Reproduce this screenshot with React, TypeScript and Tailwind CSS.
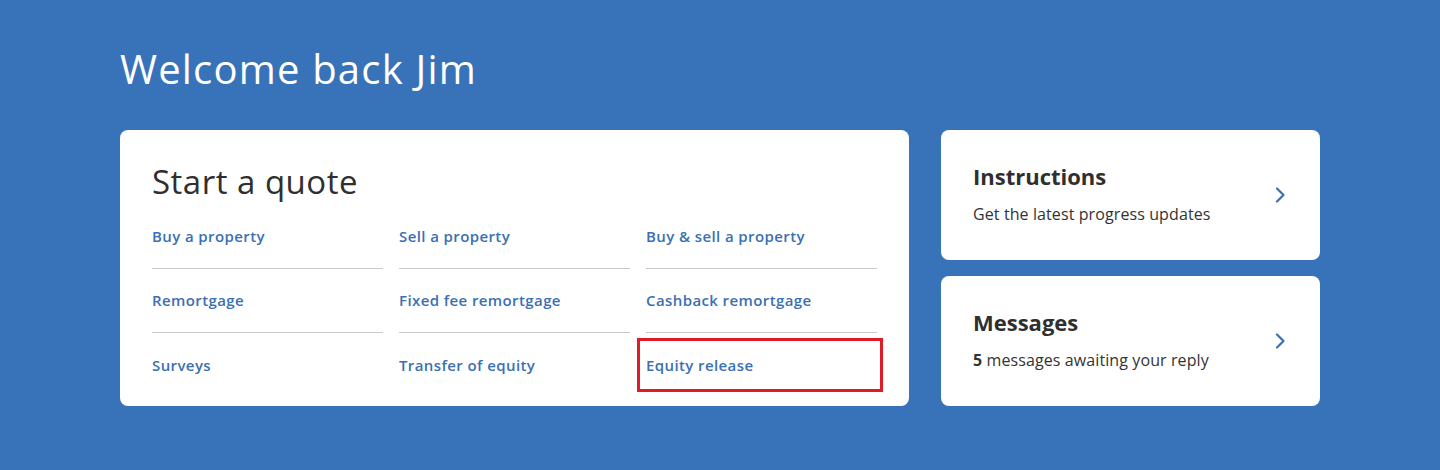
const LINKS = [
  "Buy a property",
  "Sell a property",
  "Buy & sell a property",
  "Remortgage",
  "Fixed fee remortgage",
  "Cashback remortgage",
  "Surveys",
  "Transfer of equity",
  "Equity release",
];

function Chevron() {
  return (
    <svg width="12" height="18" viewBox="0 0 12 18" fill="none" aria-hidden>
      <path d="M3 2.5 9.5 9 3 15.5" stroke="#3a70b3" strokeWidth="2.2" strokeLinecap="round" strokeLinejoin="round" />
    </svg>
  );
}

function SideCard({ title, children }: { title: string; children: React.ReactNode }) {
  return (
    <a href="#" className="flex h-[130px] items-center justify-between rounded-lg bg-white pl-8 pr-[34px]">
      <div className="-mt-[5px]">
        <h3 className="text-[22px] font-bold leading-7 text-[#2f2f2f]">{title}</h3>
        <p className="mt-[14px] text-[16px] leading-5 tracking-[0.1px] text-[#333]">{children}</p>
      </div>
      <Chevron />
    </a>
  );
}

export default function App() {
  return (
    <div className="min-h-[470px] bg-[#3873ba] px-[120px] pt-[43px] font-['Open_Sans','Lato',sans-serif]">
      <h1 className="text-[40px] font-medium leading-[52px] tracking-[0.03em] text-white">Welcome back Jim</h1>

      <div className="mt-[35px] flex gap-8">
        {/* quote shortcuts */}
        <section className="w-[789px] rounded-lg bg-white px-8 pb-[9px] pt-[29px]">
          <h2 className="text-[33px] font-normal leading-[46px] tracking-[0.5px] text-[#2f2f2f]">Start a quote</h2>
          <ul className="grid grid-cols-3 gap-x-4">
            {LINKS.map((label, i) => (
              <li
                key={label}
                className={`relative flex h-16 items-center ${i < 6 ? "border-b border-[#c8c8c8]" : ""}`}
              >
                <a href="#" className="text-[15px] font-semibold tracking-[0.4px] text-[#3a70b3]">
                  {label}
                </a>
                {label === "Equity release" && (
                  <span className="pointer-events-none absolute -left-[9px] -right-[6px] top-[5px] bottom-[5px] border-[3px] border-[#e01b24]" />
                )}
              </li>
            ))}
          </ul>
        </section>

        <div className="flex w-[379px] flex-col gap-4">
          <SideCard title="Instructions">Get the latest progress updates</SideCard>
          <SideCard title="Messages">
            <b className="font-bold">5</b> messages awaiting your reply
          </SideCard>
        </div>
      </div>
    </div>
  );
}
